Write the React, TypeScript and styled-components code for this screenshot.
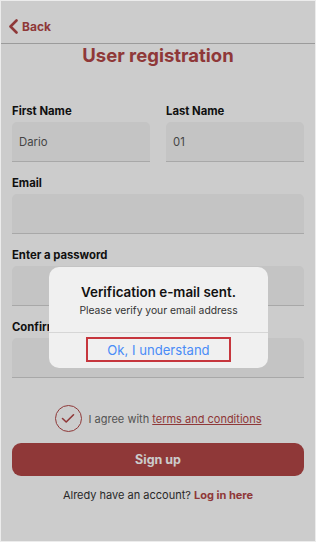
import React from 'react';
import styled, { createGlobalStyle } from 'styled-components';

const COLOR = {
  RED: '#b34747',
  TEXT: '#141414',
  GRAY: '#6a6a6a',
  FIELD: '#f5f5f5',
  FIELD_LINE: '#d2d2d2',
  BLUE: '#4a8cf7',
};

const GlobalStyle = createGlobalStyle`
  html, body {
    margin: 0;
    padding: 0;
    background: #ffffff;
  }
  * {
    box-sizing: border-box;
  }
  body {
    font-family: Inter, "Liberation Sans", sans-serif;
  }
`;

const Frame = styled.div`
  position: relative;
  width: 316px;
  height: 542px;
  overflow: hidden;
  background: #ffffff;
  border: 1px solid #ececec;
`;

const Header = styled.div`
  display: flex;
  align-items: center;
  height: 43px;
  padding: 8px 0 0 7px;
  border-bottom: 1px solid #c2c2c2;
`;

const BackButton = styled.div`
  display: flex;
  align-items: center;
  gap: 3px;
  color: ${COLOR.RED};
  font-size: 12px;
  font-weight: 700;
`;

const Title = styled.h1`
  margin: 0;
  text-align: center;
  color: ${COLOR.RED};
  font-size: 18.5px;
  font-weight: 700;
  line-height: 22px;
`;

const Form = styled.div`
  display: flex;
  flex-direction: column;
  gap: 14px;
  padding: 38px 11px 0 11px;
`;

const Row = styled.div`
  display: grid;
  grid-template-columns: 1fr 1fr;
  gap: 16px;
`;

const Field = styled.div`
  display: flex;
  flex-direction: column;
  gap: 4px;
`;

const Label = styled.label`
  color: ${COLOR.TEXT};
  font-size: 11.3px;
  font-weight: 700;
  line-height: 14px;
`;

const Input = styled.div`
  height: 40px;
  padding: 0 7px;
  display: flex;
  align-items: center;
  background: ${COLOR.FIELD};
  border-radius: 5px 5px 0 0;
  border-bottom: 1px solid ${COLOR.FIELD_LINE};
  color: #555;
  font-size: 11.3px;
`;

const Agree = styled.div`
  display: flex;
  align-items: center;
  justify-content: center;
  gap: 7px;
  margin-top: 27px;
  color: ${COLOR.GRAY};
  font-size: 11px;
`;

const Check = styled.div`
  width: 27px;
  height: 27px;
  border-radius: 50%;
  border: 1.5px solid ${COLOR.RED};
  display: flex;
  align-items: center;
  justify-content: center;
`;

const TermsLink = styled.span`
  color: ${COLOR.RED};
  text-decoration: underline;
`;

const SignUp = styled.button`
  display: block;
  width: 292px;
  height: 33px;
  margin: 11px 0 0 11px;
  border: none;
  border-radius: 9px;
  background: ${COLOR.RED};
  color: #ffffff;
  font-family: inherit;
  font-size: 12.5px;
  font-weight: 700;
`;

const LoginLine = styled.p`
  margin: 12px 0 0;
  text-align: center;
  color: #333;
  font-size: 11px;
  line-height: 14px;
`;

const LoginLink = styled.span`
  color: ${COLOR.RED};
  font-weight: 700;
`;

const Overlay = styled.div`
  position: absolute;
  inset: 0;
  background: rgba(0, 0, 0, 0.2);
`;

const Dialog = styled.div`
  position: absolute;
  left: 48px;
  top: 266px;
  width: 219px;
  border-radius: 10px;
  background: #f0f0f0;
  text-align: center;
`;

const DialogBody = styled.div`
  padding: 16px 10px 15px;
  border-bottom: 1px solid #d6d6d6;
`;

const DialogTitle = styled.div`
  color: #111;
  font-size: 13.4px;
  font-weight: 600;
  line-height: 18px;
`;

const DialogText = styled.div`
  margin-top: 2px;
  color: #333;
  font-size: 10.3px;
  line-height: 14px;
`;

const DialogAction = styled.div`
  padding: 4px 0 6px;
  display: flex;
  justify-content: center;
`;

const Highlight = styled.div`
  width: 145px;
  height: 25px;
  border: 2.5px solid #c6363d;
  display: flex;
  align-items: center;
  justify-content: center;
  color: ${COLOR.BLUE};
  font-size: 13.1px;
`;

const App = () => {
  return (
    <Frame>
      <GlobalStyle />
      <Header>
        <BackButton>
          <svg width="11" height="15" viewBox="0 0 11 15">
            <path d="M8.5 1.5 L2.5 7.5 L8.5 13.5" fill="none" stroke={COLOR.RED} strokeWidth="2.6" strokeLinecap="round" strokeLinejoin="round" />
          </svg>
          Back
        </BackButton>
      </Header>
      <Title>User registration</Title>
      <Form>
        <Row>
          <Field>
            <Label>First Name</Label>
            <Input>Dario</Input>
          </Field>
          <Field>
            <Label>Last Name</Label>
            <Input>01</Input>
          </Field>
        </Row>
        <Field>
          <Label>Email</Label>
          <Input />
        </Field>
        <Field>
          <Label>Enter a password</Label>
          <Input />
        </Field>
        <Field>
          <Label>Confirm password</Label>
          <Input />
        </Field>
      </Form>
      <Agree>
        <Check>
          <svg width="14" height="11" viewBox="0 0 14 11">
            <path d="M1.5 5.5 L5.2 9 L12.5 1.8" fill="none" stroke={COLOR.RED} strokeWidth="1.6" strokeLinecap="round" strokeLinejoin="round" />
          </svg>
        </Check>
        <span>
          I agree with <TermsLink>terms and conditions</TermsLink>
        </span>
      </Agree>
      <SignUp>Sign up</SignUp>
      <LoginLine>
        Alredy have an account? <LoginLink>Log in here</LoginLink>
      </LoginLine>
      <Overlay />
      <Dialog>
        <DialogBody>
          <DialogTitle>Verification e-mail sent.</DialogTitle>
          <DialogText>Please verify your email address</DialogText>
        </DialogBody>
        <DialogAction>
          <Highlight>Ok, I understand</Highlight>
        </DialogAction>
      </Dialog>
    </Frame>
  );
};

export default App;
